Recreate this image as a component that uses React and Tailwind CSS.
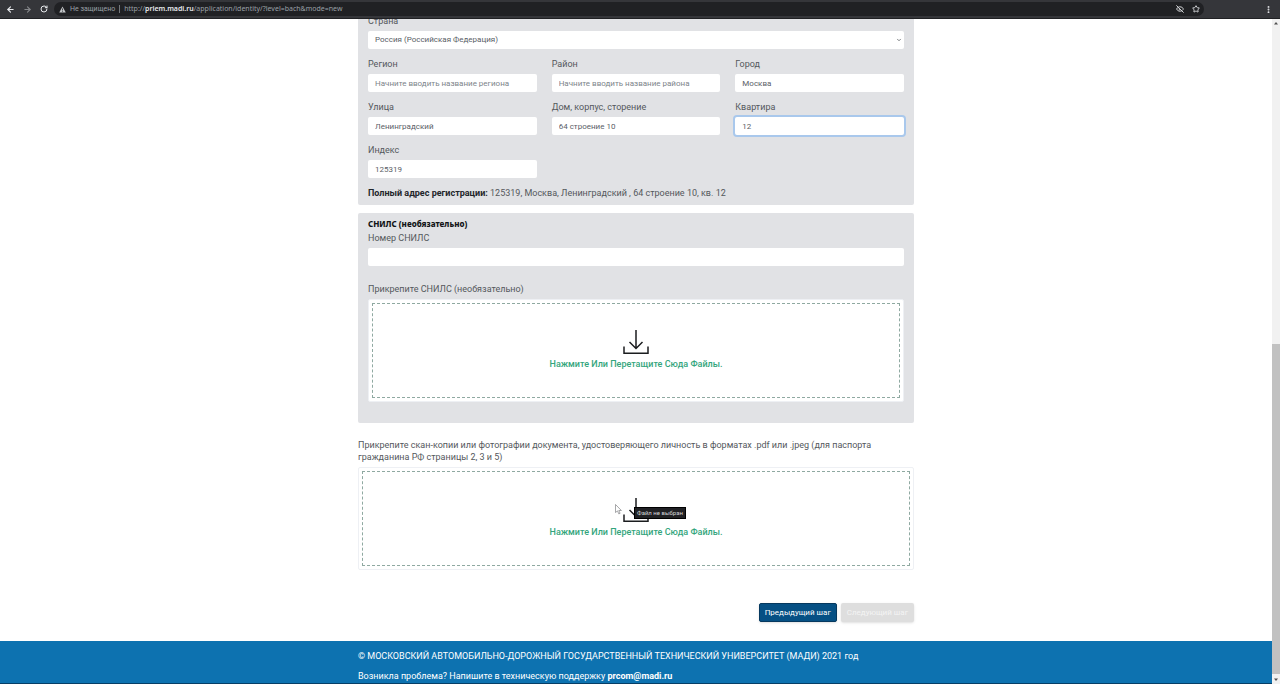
import { useState } from 'react'
import { ArrowLeft, ArrowRight, RotateCw, Star, EyeOff, EllipsisVertical, ChevronDown } from 'lucide-react'

const inputClass = 'block h-[18px] w-full rounded-xs bg-white px-[7px] text-[8px] text-[#5a6067] placeholder:text-[#7d848a] outline-none'

const ADDRESS_FIELDS = [
  { id: 'region', label: 'Регион', placeholder: 'Начните вводить название региона' },
  { id: 'district', label: 'Район', placeholder: 'Начните вводить название района' },
  { id: 'city', label: 'Город' },
  { id: 'street', label: 'Улица' },
  { id: 'house', label: 'Дом, корпус, сторение' },
  { id: 'flat', label: 'Квартира', active: true },
  { id: 'zip', label: 'Индекс' },
]

export default function App() {
  const [address, setAddress] = useState({
    region: '', district: '', city: 'Москва', street: 'Ленинградский', house: '64 строение 10', flat: '12', zip: '125319',
  })
  const setField = (id, value) => setAddress((a) => ({ ...a, [id]: value }))

  return (
    <div className="flex h-screen flex-col overflow-hidden bg-white font-['Roboto',sans-serif] text-[9px] leading-3 text-[#54585c]">
      <BrowserBar />
      <div className="flex min-h-0 flex-1">
        <div className="flex min-w-0 flex-1 flex-col overflow-hidden">
          <main className="mx-auto -mt-1 w-full max-w-[556px] flex-1">
            <section className="rounded-b-xs bg-[#e1e2e5] px-[10px] pb-[6px]">
              <label htmlFor="country" className="block">Страна</label>
              <div className="relative mt-1">
                <select id="country" className={`${inputClass} appearance-none`}>
                  <option>Россия (Российская Федерация)</option>
                </select>
                <ChevronDown size={6} strokeWidth={3} className="pointer-events-none absolute right-[2px] top-[6px]" />
              </div>
              <div className="mt-[9px] grid grid-cols-3 gap-x-[15px] gap-y-[9px]">
                {ADDRESS_FIELDS.map((f) => (
                  <div key={f.id}>
                    <label htmlFor={f.id} className="block">{f.label}</label>
                    <input id={f.id} type="text" value={address[f.id]} placeholder={f.placeholder}
                      onChange={(e) => setField(f.id, e.target.value)}
                      className={`${inputClass} mt-1 ${f.active ? 'ring-2 ring-[#a9c8ec]' : ''}`} />
                  </div>
                ))}
              </div>
              <p className="mt-[9px]">
                <b className="text-[#212529]">Полный адрес регистрации:</b>{' '}
                {address.zip}, {address.city}, {address.street} , {address.house}, кв. {address.flat}
              </p>
            </section>

            <section className="mt-2 rounded-xs bg-[#e1e2e5] px-[10px] pb-[21px] pt-[5px]">
              <h2 className="font-['Noto_Sans',sans-serif] text-[8px] font-extrabold text-[#121416]">СНИЛС (необязательно)</h2>
              <label htmlFor="snils" className="mt-[2px] block">Номер СНИЛС</label>
              <input id="snils" type="text" className={`${inputClass} mt-1`} />
              <p className="mt-[17px]">Прикрепите СНИЛС (необязательно)</p>
              <DropZone id="snils-file" />
            </section>

            <p className="mt-4">
              Прикрепите скан-копии или фотографии документа, удостоверяющего личность в форматах .pdf или .jpeg (для паспорта гражданина РФ страницы 2, 3 и 5)
            </p>
            <DropZone id="passport-file" hovered />

            <div className="mt-[33px] flex justify-end gap-1">
              <button type="button" className="h-[19px] rounded-xs border border-[#06395f] bg-[#065084] px-[5px] text-[8px] text-white shadow-sm">
                Предыдущий шаг
              </button>
              <button type="button" disabled className="h-[19px] rounded-xs bg-[#dedede] px-[6px] text-[8px] text-[#f4f4f4] shadow-sm">
                Следующий шаг
              </button>
            </div>
          </main>

          <footer className="border-b border-[#063e66] bg-[#0d72b0] text-white">
            <div className="mx-auto w-full max-w-[556px] pb-[1px] pt-[9px]">
              <p>© МОСКОВСКИЙ АВТОМОБИЛЬНО-ДОРОЖНЫЙ ГОСУДАРСТВЕННЫЙ ТЕХНИЧЕСКИЙ УНИВЕРСИТЕТ (МАДИ) 2021 год</p>
              <p className="mt-2">
                Возникла проблема? Напишите в техническую поддержку{' '}
                <a href="mailto:prcom@madi.ru" className="font-bold">prcom@madi.ru</a>
              </p>
            </div>
          </footer>
        </div>
        <Scrollbar />
      </div>
    </div>
  )
}

function BrowserBar() {
  return (
    <header className="z-10 flex h-[19px] shrink-0 items-center border-b border-[#202124] bg-[#35363a] font-['Roboto',sans-serif] text-[#e8eaed]">
      <div className="flex w-[54px] items-center gap-2 pl-[6px]">
        <button type="button" aria-label="Назад"><ArrowLeft size={9} strokeWidth={3} /></button>
        <button type="button" aria-label="Вперёд" className="text-[#85878a]"><ArrowRight size={9} strokeWidth={3} /></button>
        <button type="button" aria-label="Обновить"><RotateCw size={8} strokeWidth={3} /></button>
      </div>
      <div className="flex h-[14px] min-w-0 flex-1 items-center rounded-full bg-[#202124] pl-[5px] pr-1 text-[7px] text-[#9aa0a6]">
        <svg width="7" height="7" viewBox="0 0 12 12" aria-hidden="true">
          <path d="M6 0.8 11.6 11H0.4Z" fill="#c4c7ca" />
          <path d="M6 4.2v3.4M6 8.6v1.2" stroke="#202124" strokeWidth="1.3" />
        </svg>
        <span className="ml-1">Не защищено</span>
        <span className="mx-1 h-2 w-px bg-[#75787c]" />
        <span className="flex-1 font-['Noto_Sans',sans-serif] text-[7px]">
          http://<b className="font-semibold text-[#e8eaed]">priem.madi.ru</b>/application/identity/?level=bach&amp;mode=new
        </span>
        <EyeOff size={8} strokeWidth={3} className="text-[#d0d2d5]" />
        <Star size={8} strokeWidth={3} className="ml-2 text-[#d0d2d5]" />
      </div>
      <button type="button" aria-label="Меню" className="ml-[60px] mr-[7px]"><EllipsisVertical size={9} strokeWidth={3} /></button>
    </header>
  )
}

function DropZone({ id, hovered }) {
  return (
    <label htmlFor={id} className="relative mt-1 block h-[103px] rounded-xs border border-[#eef0f4] bg-white p-[3px]">
      <input id={id} type="file" className="sr-only" />
      <span className="flex h-full flex-col items-center border border-dashed border-[#8fa9a1] pt-[25px]">
        <svg width="26" height="26" viewBox="0 0 26 26" fill="none" stroke="#1b1d1f" strokeWidth="1.5" aria-hidden="true">
          <path d="M13 1v18M6.5 13l6.5 6.5 6.5-6.5M1 17.5V24.2h24V17.5" />
        </svg>
        <span className="mt-[3px] font-medium text-[#33a57c]">Нажмите Или Перетащите Сюда Файлы.</span>
      </span>
      {hovered && (
        <>
          <span role="tooltip" className="absolute left-1/2 top-[39px] -ml-[2px] whitespace-nowrap border border-black bg-[#202124] px-[2px] text-[6px] leading-[10px] text-[#d5d6d8]">
            Файл не выбран
          </span>
          <svg width="7" height="11" viewBox="0 0 7 11" className="absolute left-1/2 top-[36px] -ml-[21px]" aria-hidden="true">
            <path d="M.5 .5v8l2-1.6 1.3 3 1.3-.6-1.3-2.8h2.6Z" fill="#fff" stroke="#6b6d70" strokeWidth=".6" />
          </svg>
        </>
      )}
    </label>
  )
}

function Scrollbar() {
  return (
    <div className="flex w-2 shrink-0 flex-col items-center bg-[#f1f1f1]" aria-hidden="true">
      <svg width="8" height="8" viewBox="0 0 8 8"><path d="M2 5.5 4 3l2 2.5Z" fill="#505050" /></svg>
      <div className="flex w-full flex-1 flex-col justify-end">
        <div className="h-[51%] w-full bg-[#c1c1c1]" />
      </div>
      <svg width="8" height="10" viewBox="0 0 8 10"><path d="M2 4.5 4 7l2-2.5Z" fill="#505050" /></svg>
    </div>
  )
}
